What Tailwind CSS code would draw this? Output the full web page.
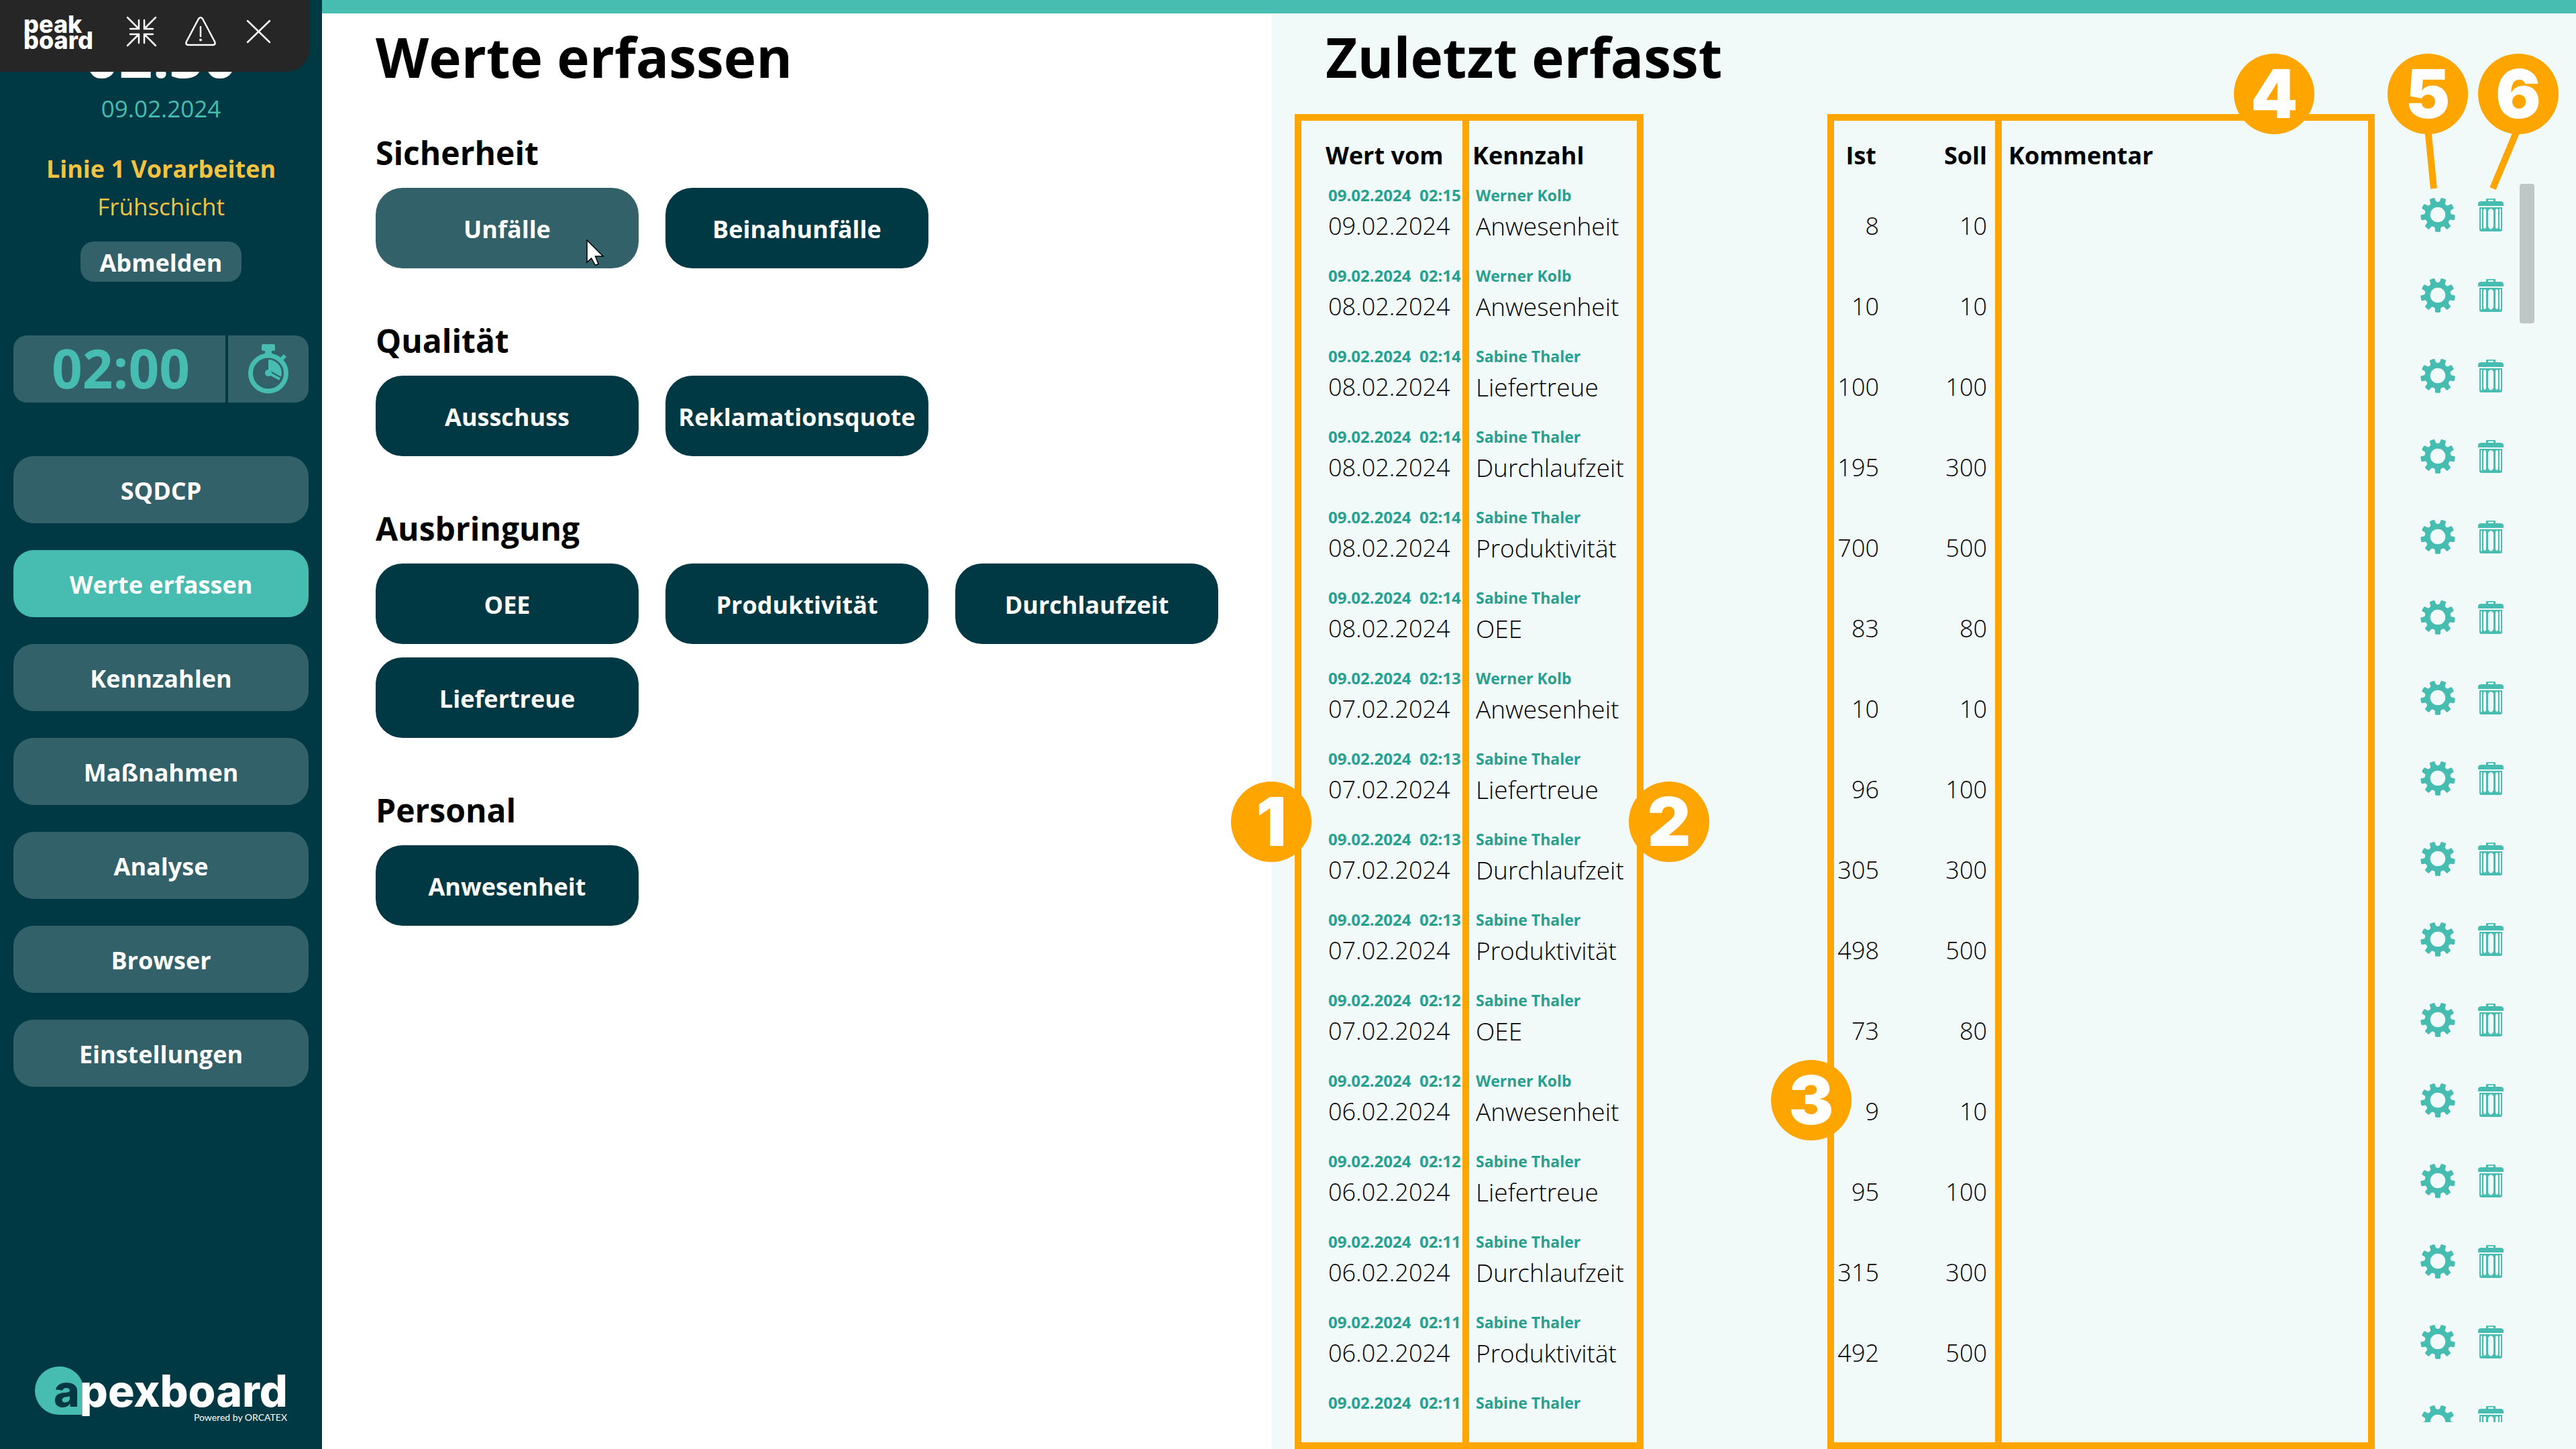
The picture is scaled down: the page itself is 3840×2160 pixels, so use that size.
<!DOCTYPE html>
<html lang="de">
<head>
<meta charset="utf-8">
<title>apexboard – Werte erfassen</title>
<script src="https://cdn.jsdelivr.net/npm/@tailwindcss/browser@4"></script>
</head>
<body class="relative flex h-screen overflow-hidden bg-white font-['Open_Sans','Noto_Sans',sans-serif] text-black">

<!-- Sidebar -->
<aside class="flex w-[480px] shrink-0 flex-col bg-[#003943] px-5 pt-8 text-center">
  <div class="text-[88px] leading-[100px] font-bold text-white">02:30</div>
  <div class="mt-1.5 text-[35px] leading-[48px] text-[#47bcb0]">09.02.2024</div>
  <div class="mt-[42px] text-[36px] leading-[48px] font-bold text-[#f5c242]">Linie 1 Vorarbeiten</div>
  <div class="mt-2 text-[35px] leading-[48px] text-[#f5c242]">Frühschicht</div>
  <button type="button" class="mx-auto mt-7 h-[60px] w-60 rounded-[20px] bg-[#336169] pt-1 text-[36px] leading-[48px] font-bold text-white">Abmelden</button>
  <div class="mt-20 flex h-[100px] gap-1">
    <div class="flex flex-1 items-center justify-center rounded-l-[20px] bg-[#336169] pb-1 pl-1 text-[80px] leading-[96px] font-bold text-[#47bcb0]">02:00</div>
    <button type="button" aria-label="Stoppuhr" class="flex w-[120px] items-center justify-center rounded-r-[20px] bg-[#336169] text-[#47bcb0]">
      <svg class="h-[74px] w-[60px]" viewBox="0 0 60 74" fill="currentColor">
        <rect x="20" y="0" width="20" height="10" rx="2"/><rect x="25" y="9" width="10" height="5"/>
        <path d="M48 20l5-5 4 4-5 5z"/>
        <circle cx="30" cy="43.500" r="26.500" fill="none" stroke="currentColor" stroke-width="7"/>
        <path d="M30 23a20 20 0 0 1 19 26L37 42l-7-4z"/>
        <path d="M30 43l17 9" stroke="#336169" stroke-width="8"/>
        <path d="M30 43l17 9" stroke="currentColor" stroke-width="4"/>
        <circle cx="30" cy="43" r="5"/>
      </svg>
    </button>
  </div>
  <nav class="mt-20 flex flex-col gap-10 text-[36px] leading-[48px] font-bold text-white">
    <button type="button" class="h-[100px] rounded-[30px] bg-[#336169] pt-1">SQDCP</button>
    <button type="button" aria-current="page" class="h-[100px] rounded-[30px] bg-[#47bcb0] pt-1">Werte erfassen</button>
    <button type="button" class="h-[100px] rounded-[30px] bg-[#336169] pt-1">Kennzahlen</button>
    <button type="button" class="h-[100px] rounded-[30px] bg-[#336169] pt-1">Maßnahmen</button>
    <button type="button" class="h-[100px] rounded-[30px] bg-[#336169] pt-1">Analyse</button>
    <button type="button" class="h-[100px] rounded-[30px] bg-[#336169] pt-1">Browser</button>
    <button type="button" class="h-[100px] rounded-[30px] bg-[#336169] pt-1">Einstellungen</button>
  </nav>
  <svg class="mx-auto mt-auto mb-8 h-[96px] w-[384px] shrink-0" viewBox="48 2032 384 96" role="img" aria-label="apexboard">
    <path d="M88 2037a36 36 0 0 0 0 72h34v-50a36 36 0 0 0-34-22z" fill="#47bcb0"/>
    <g class="font-['Inter',sans-serif] text-[66px] font-extrabold">
      <text x="80" y="2097" fill="#fff"><tspan fill="#003943">a</tspan>pexboard</text>
    </g>
    <text x="428" y="2118" text-anchor="end" fill="#fff" class="font-['Lato',sans-serif] text-[14px]">Powered by ORCATEX</text>
  </svg>
</aside>

<div class="flex min-w-0 flex-1 flex-col">
  <div class="h-5 shrink-0 bg-[#47bcb0]"></div>
  <div class="grid min-h-0 flex-1 grid-cols-[1416fr_1944fr] grid-rows-1">

    <!-- Entry buttons -->
    <main class="min-w-0 pt-3.5 pl-20">
      <h1 class="text-[82px] leading-[100px] font-bold">Werte erfassen</h1>
      <div id="groups" class="mt-16 flex flex-col gap-[78px]"></div>
    </main>

    <!-- Latest entries -->
    <section class="relative flex min-h-0 min-w-0 flex-col bg-[#f1faf8] pt-3.5 pl-20">
      <h2 class="text-[82px] leading-[100px] font-bold">Zuletzt erfasst</h2>
      <div class="mt-[66px] mb-10 flex min-h-0 flex-1 gap-6 overflow-hidden pr-[62px]">
        <div class="min-w-0 flex-1">
          <table class="w-full table-fixed border-collapse text-left">
            <colgroup><col class="w-[219px]"><col class="w-[505px]"><col class="w-[101px]"><col class="w-[161px]"><col><col class="w-[87px]"><col class="w-[38px]"></colgroup>
            <thead class="text-[36px] leading-[56px]">
              <tr class="h-[60px]">
                <th class="p-0 pt-1 font-bold">Wert vom</th>
                <th class="p-0 pt-1 font-bold">Kennzahl</th>
                <th class="p-0 pt-1 pr-1 text-right font-bold">Ist</th>
                <th class="p-0 pt-1 text-right font-bold">Soll</th>
                <th class="p-0 pt-1 pl-8 font-bold">Kommentar</th>
                <td></td><td></td>
              </tr>
            </thead>
            <tbody id="rows"></tbody>
          </table>
        </div>
        <div class="mt-[60px] w-[22px] bg-[#f3f8f8] pt-3.5">
          <div class="h-52 rounded bg-[#c0c6c5]"></div>
        </div>
      </div>

      <!-- Numbered callouts -->
      <div class="pointer-events-none absolute inset-0 font-['Inter',sans-serif] text-[100px] leading-[120px] font-black text-white">
        <div class="absolute top-[150px] bottom-0 left-[34px] flex w-[520px] border-[10px] border-[#ffa500]"><div class="w-[250px] border-r-[10px] border-[#ffa500]"></div></div>
        <div class="absolute top-[150px] right-[300px] bottom-0 left-[828px] flex border-[10px] border-[#ffa500]"><div class="w-[250px] border-r-[10px] border-[#ffa500]"></div></div>
        <svg class="absolute top-[170px] right-[60px] h-[100px] w-[240px]" viewBox="0 0 240 100" stroke="#ffa500" stroke-width="10"><path d="M79 0l9 91M214 0l-38 91"/></svg>
        <div class="absolute top-[1145px] left-[-61px] size-[120px] rounded-full bg-[#ffa500] text-center">1</div>
        <div class="absolute top-[1145px] left-[532px] size-[120px] rounded-full bg-[#ffa500] text-center">2</div>
        <div class="absolute top-[1560px] left-[744px] size-[120px] rounded-full bg-[#ffa500] text-center">3</div>
        <div class="absolute top-[60px] right-[390px] size-[120px] rounded-full bg-[#ffa500] text-center">4</div>
        <div class="absolute top-[60px] right-[161px] size-[120px] rounded-full bg-[#ffa500] text-center">5</div>
        <div class="absolute top-[60px] right-[26px] size-[120px] rounded-full bg-[#ffa500] text-center">6</div>
      </div>
    </section>
  </div>
</div>

<!-- Runtime toolbar -->
<div class="absolute top-0 left-0 flex h-[107px] w-[462px] rounded-br-[36px] bg-[#262626] pt-5 pl-[35px] text-white">
  <div class="w-[153px] pt-1 font-['Inter',sans-serif] text-[36px] leading-6 font-extrabold">peak<br>board</div>
  <div class="flex h-[54px] items-center gap-[42px]">
    <button type="button" aria-label="Verkleinern"><svg class="size-[46px]" viewBox="0 0 46 46" fill="none" stroke="currentColor" stroke-width="2.500" stroke-linecap="round"><path d="M2 2l17 17M19 6v13H6M44 2L27 19M27 6v13h13M2 44l17-17M6 27h13v13M44 44L27 27M40 27H27v13"/></svg></button>
    <button type="button" aria-label="Warnungen"><svg class="size-[46px]" viewBox="0 0 46 46" fill="none" stroke="currentColor" stroke-width="2.500" stroke-linecap="round" stroke-linejoin="round"><path d="M20 4q3-4 6 0l18 34q2 5-3 5H5q-5 0-3-5zM23 16v14"/><circle cx="23" cy="35.500" r="2" fill="currentColor" stroke="none"/></svg></button>
    <button type="button" aria-label="Schließen"><svg class="size-[46px]" viewBox="0 0 46 46" fill="none" stroke="currentColor" stroke-width="2.500" stroke-linecap="round"><path d="M5 7l33 32M38 7L5 39"/></svg></button>
  </div>
</div>

<script>
  const groups = [
    ["Sicherheit", ["Unfälle", "Beinahunfälle"]],
    ["Qualität", ["Ausschuss", "Reklamationsquote"]],
    ["Ausbringung", ["OEE", "Produktivität", "Durchlaufzeit", "Liefertreue"]],
    ["Personal", ["Anwesenheit"]],
  ];
  const pointer = `<svg class="absolute top-[77px] left-[314px] h-10 w-7" viewBox="0 0 28 40"><path d="M1 1v33l6.500-6 6 10.500 4.500-2-4.500-11.500H25z" fill="#fff" stroke="#000" stroke-width="1.500"/></svg>`;
  document.getElementById("groups").innerHTML = groups.map(([name, items]) => `
    <section>
      <h2 class="text-[48px] leading-[60px] font-bold">${name}</h2>
      <div class="mt-[22px] flex flex-wrap gap-x-10 gap-y-5">${items.map(t => `
        <button type="button" class="relative h-[120px] w-[392px] rounded-[40px] ${t === "Unfälle" ? "bg-[#336169]" : "bg-[#003943]"} pt-1 text-[36px] leading-[48px] font-bold text-white">${t}${t === "Unfälle" ? pointer : ""}</button>`).join("")}
      </div>
    </section>`).join("");

  // Nine-toothed gear outline around its centre point
  const at = (r, deg) => (27 + r * Math.cos(deg * Math.PI / 180)).toFixed(1) + " " + (26.5 + r * Math.sin(deg * Math.PI / 180)).toFixed(1);
  let gear = "";
  for (let k = 0; k < 9; k++) {
    const a = 90 + 40 * k;
    gear += (k ? "L" : "M") + at(20.500, a - 12) + "L" + at(25, a - 9.500) + "Q" + at(26.300, a - 9) + " " + at(26.300, a - 6) + "L" + at(26.300, a + 6) + "Q" + at(26.300, a + 9) + " " + at(25, a + 9.500) + "L" + at(20.500, a + 12) + "Q" + at(18.500, a + 20) + " " + at(20.500, a + 28);
  }
  gear += "ZM38.500 26.500a11.500 11.500 0 1 0-23 0a11.500 11.500 0 1 0 23 0Z";
  const gearIcon = `<svg class="h-[52px] w-[54px]" viewBox="0 0 54 53" fill="currentColor" fill-rule="evenodd"><path d="${gear}"/></svg>`;
  const trashIcon = `<svg class="h-[49px] w-[38px]" viewBox="0 0 38 49" fill="currentColor" fill-rule="evenodd"><path d="M12 4V1q0-1 1-1h12q1 0 1 1v3h7q5 0 5 4v3H0V8q0-4 5-4zM15 1.800V4h8V1.800z"/><path d="M2 13h34v33q0 3-3 3H5q-3 0-3-3zM4 15v30q1.500 1 2 0V15zM32 15v30q1.500 1 2 0V15zM8 17v26q2 4 4 0V17q-2-4-4 0zM26 17v26q2 4 4 0V17q-2-4-4 0zM15 18v24q4 7 8 0V18q-4-6-8 0z"/></svg>`;

  const W = "Werner Kolb", S = "Sabine Thaler";
  const rows = [
    ["02:15", W, "09", "Anwesenheit", 8, 10], ["02:14", W, "08", "Anwesenheit", 10, 10],
    ["02:14", S, "08", "Liefertreue", 100, 100], ["02:14", S, "08", "Durchlaufzeit", 195, 300],
    ["02:14", S, "08", "Produktivität", 700, 500], ["02:14", S, "08", "OEE", 83, 80],
    ["02:13", W, "07", "Anwesenheit", 10, 10], ["02:13", S, "07", "Liefertreue", 96, 100],
    ["02:13", S, "07", "Durchlaufzeit", 305, 300], ["02:13", S, "07", "Produktivität", 498, 500],
    ["02:12", S, "07", "OEE", 73, 80], ["02:12", W, "06", "Anwesenheit", 9, 10],
    ["02:12", S, "06", "Liefertreue", 95, 100], ["02:11", S, "06", "Durchlaufzeit", 315, 300],
    ["02:11", S, "06", "Produktivität", 492, 500], ["02:11", S, "", "", "", ""],
  ];
  document.getElementById("rows").innerHTML = rows.map(([time, who, day, name, ist, soll]) => `
    <tr class="h-[120px] align-top text-[36px] leading-[48px] font-light">
      <td class="p-0 pt-[15px] pl-1 whitespace-nowrap"><div class="text-[24px] leading-8 font-bold whitespace-pre text-[#27a08f]">09.02.2024  ${time}</div><div class="mt-1.5">${day && day + ".02.2024"}</div></td>
      <td class="p-0 pt-[15px] pl-[5px]"><div class="text-[23px] leading-8 font-bold text-[#27a08f]">${who}</div><div class="mt-1.5 text-[37px]">${name}</div></td>
      <td class="p-0 pt-[53px] text-right">${ist}</td>
      <td class="p-0 pt-[53px] text-right">${soll}</td>
      <td></td>
      <td class="p-0 align-middle"><button type="button" aria-label="Bearbeiten" class="block text-[#47bcb0]">${gearIcon}</button></td>
      <td class="p-0 align-middle"><button type="button" aria-label="Löschen" class="block text-[#47bcb0]">${trashIcon}</button></td>
    </tr>`).join("");
</script>
</body>
</html>
